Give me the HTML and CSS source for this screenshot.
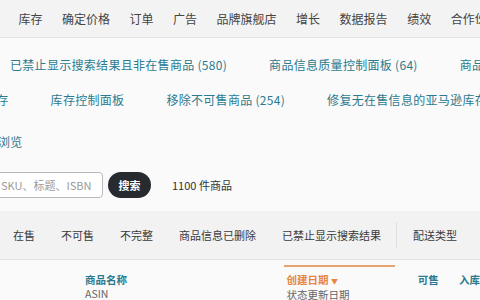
FILE: index.html
```html
<!DOCTYPE html>
<html lang="zh">
  <head>
    <meta charset="utf-8">
    <title>管理库存</title>
    <link rel="stylesheet" href="styles.css">
  </head>
  <body>
    <div class="topnav">
      <span class="navItem">目录</span>
      <span class="navItem">库存</span>
      <span class="navItem">确定价格</span>
      <span class="navItem">订单</span>
      <span class="navItem">广告</span>
      <span class="navItem">品牌旗舰店</span>
      <span class="navItem">增长</span>
      <span class="navItem">数据报告</span>
      <span class="navItem">绩效</span>
      <span class="navItem">合作伙伴网络</span>
    </div>

    <div class="linkRow first">
      <a class="link">已禁止显示搜索结果且非在售商品 (580)</a>
      <span class="sep"></span>
      <a class="link">商品信息质量控制面板 (64)</a>
      <span class="sep"></span>
      <a class="link">商品信息</a>
    </div>
    <div class="linkRow second">
      <a class="link">库存</a>
      <span class="sep"></span>
      <a class="link">库存控制面板</a>
      <span class="sep"></span>
      <a class="link">移除不可售商品 (254)</a>
      <span class="sep"></span>
      <a class="link">修复无在售信息的亚马逊库存</a>
    </div>

    <div class="browse"><a class="link">浏览</a></div>

    <div class="searchRow">
      <div class="searchBox">SKU、标题、ISBN</div>
      <button class="searchBtn">搜索</button>
      <span class="count">1100 件商品</span>
    </div>

    <div class="tabs">
      <span class="tab">在售</span>
      <span class="tab">不可售</span>
      <span class="tab">不完整</span>
      <span class="tab">商品信息已删除</span>
      <span class="tab">已禁止显示搜索结果</span>
      <span class="tabSep"></span>
      <span class="tab type">配送类型</span>
    </div>

    <div class="tableHead">
      <div class="col colName">
        <div class="colTitle">商品名称</div>
        <div class="colSub">ASIN</div>
      </div>
      <div class="col colDate">
        <div class="colTitle sorted">创建日期 <span class="arrow">▼</span></div>
        <div class="colSub">状态更新日期</div>
      </div>
      <div class="col colAvail">
        <div class="colTitle">可售</div>
      </div>
      <div class="col colIn">
        <div class="colTitle">入库</div>
      </div>
    </div>
  </body>
</html>
```

FILE: styles.css
```css
body {
    margin: 0;
    width: 480px;
    height: 300px;
    overflow: hidden;
    background-color: #fafafa;
    font-family: "Noto Sans CJK SC", "Noto Sans", sans-serif;
    color: #333;
}

.topnav {
    display: flex;
    gap: 19.5px;
    height: 37px;
    align-items: center;
    margin-left: -25px;
    background-color: #f3f3f3;
    border-bottom: 1px solid #e2e2e2;
    white-space: nowrap;
}

.navItem {
    font-size: 12px;
    color: #444;
}

.linkRow {
    display: flex;
    align-items: center;
    gap: 21px;
    white-space: nowrap;
    height: 20px;
}

.linkRow.first {
    margin-top: 16px;
    margin-left: 10px;
}

.linkRow.second {
    margin-top: 15px;
    margin-left: -16px;
}

.link {
    font-size: 12px;
    letter-spacing: 0.3px;
    color: #2a7b90;
}

.sep {
    width: 1px;
    height: 14px;
    background-color: #dcdcdc;
}

.browse {
    margin-top: 19px;
    margin-left: -2px;
    height: 20px;
}

.searchRow {
    display: flex;
    align-items: center;
    margin-top: 24px;
    height: 26px;
}

.searchBox {
    box-sizing: border-box;
    width: 113px;
    height: 26px;
    margin-left: -10px;
    padding-left: 10px;
    line-height: 24px;
    border: 1px solid #b9b9b9;
    border-radius: 4px;
    background-color: #fff;
    font-size: 11px;
    color: #9a9a9a;
    white-space: nowrap;
}

.searchBtn {
    margin-left: 5px;
    width: 43px;
    height: 26px;
    border: none;
    border-radius: 13px;
    background-color: #272b2f;
    color: #fff;
    font-family: inherit;
    font-size: 11px;
    font-weight: bold;
    padding: 0;
}

.count {
    margin-left: 21px;
    font-size: 11px;
    color: #333;
}

.tabs {
    display: flex;
    align-items: center;
    margin-top: 13px;
    height: 48px;
    padding-left: 13px;
    gap: 26px;
    background-color: #f2f2f2;
    border-bottom: 1px solid #e4e4e4;
    white-space: nowrap;
}

.tab {
    font-size: 11px;
    color: #3a3a3a;
}

.tabSep {
    width: 1px;
    height: 26px;
    margin: 0 -10px 0 -11px;
    background-color: #dedede;
}

.tableHead {
    display: flex;
    margin-top: 5px;
    height: 40px;
}

.col {
    padding-top: 8px;
    box-sizing: border-box;
}

.colName {
    width: 287px;
    padding-left: 85px;
}

.colDate {
    width: 113px;
    padding-left: 3px;
    border-top: 2px solid #e8a46e;
    padding-top: 6px;
}

.colAvail {
    width: 65px;
    padding-left: 23px;
}

.colIn {
    padding-left: 0;
}

.colTitle {
    font-size: 10.5px;
    font-weight: bold;
    color: #2a7b90;
    line-height: 14px;
    white-space: nowrap;
}

.colTitle.sorted {
    color: #e8853f;
}

.arrow {
    font-size: 7px;
    vertical-align: middle;
}

.colSub {
    font-size: 10.5px;
    color: #666;
    line-height: 13px;
    white-space: nowrap;
}
```
